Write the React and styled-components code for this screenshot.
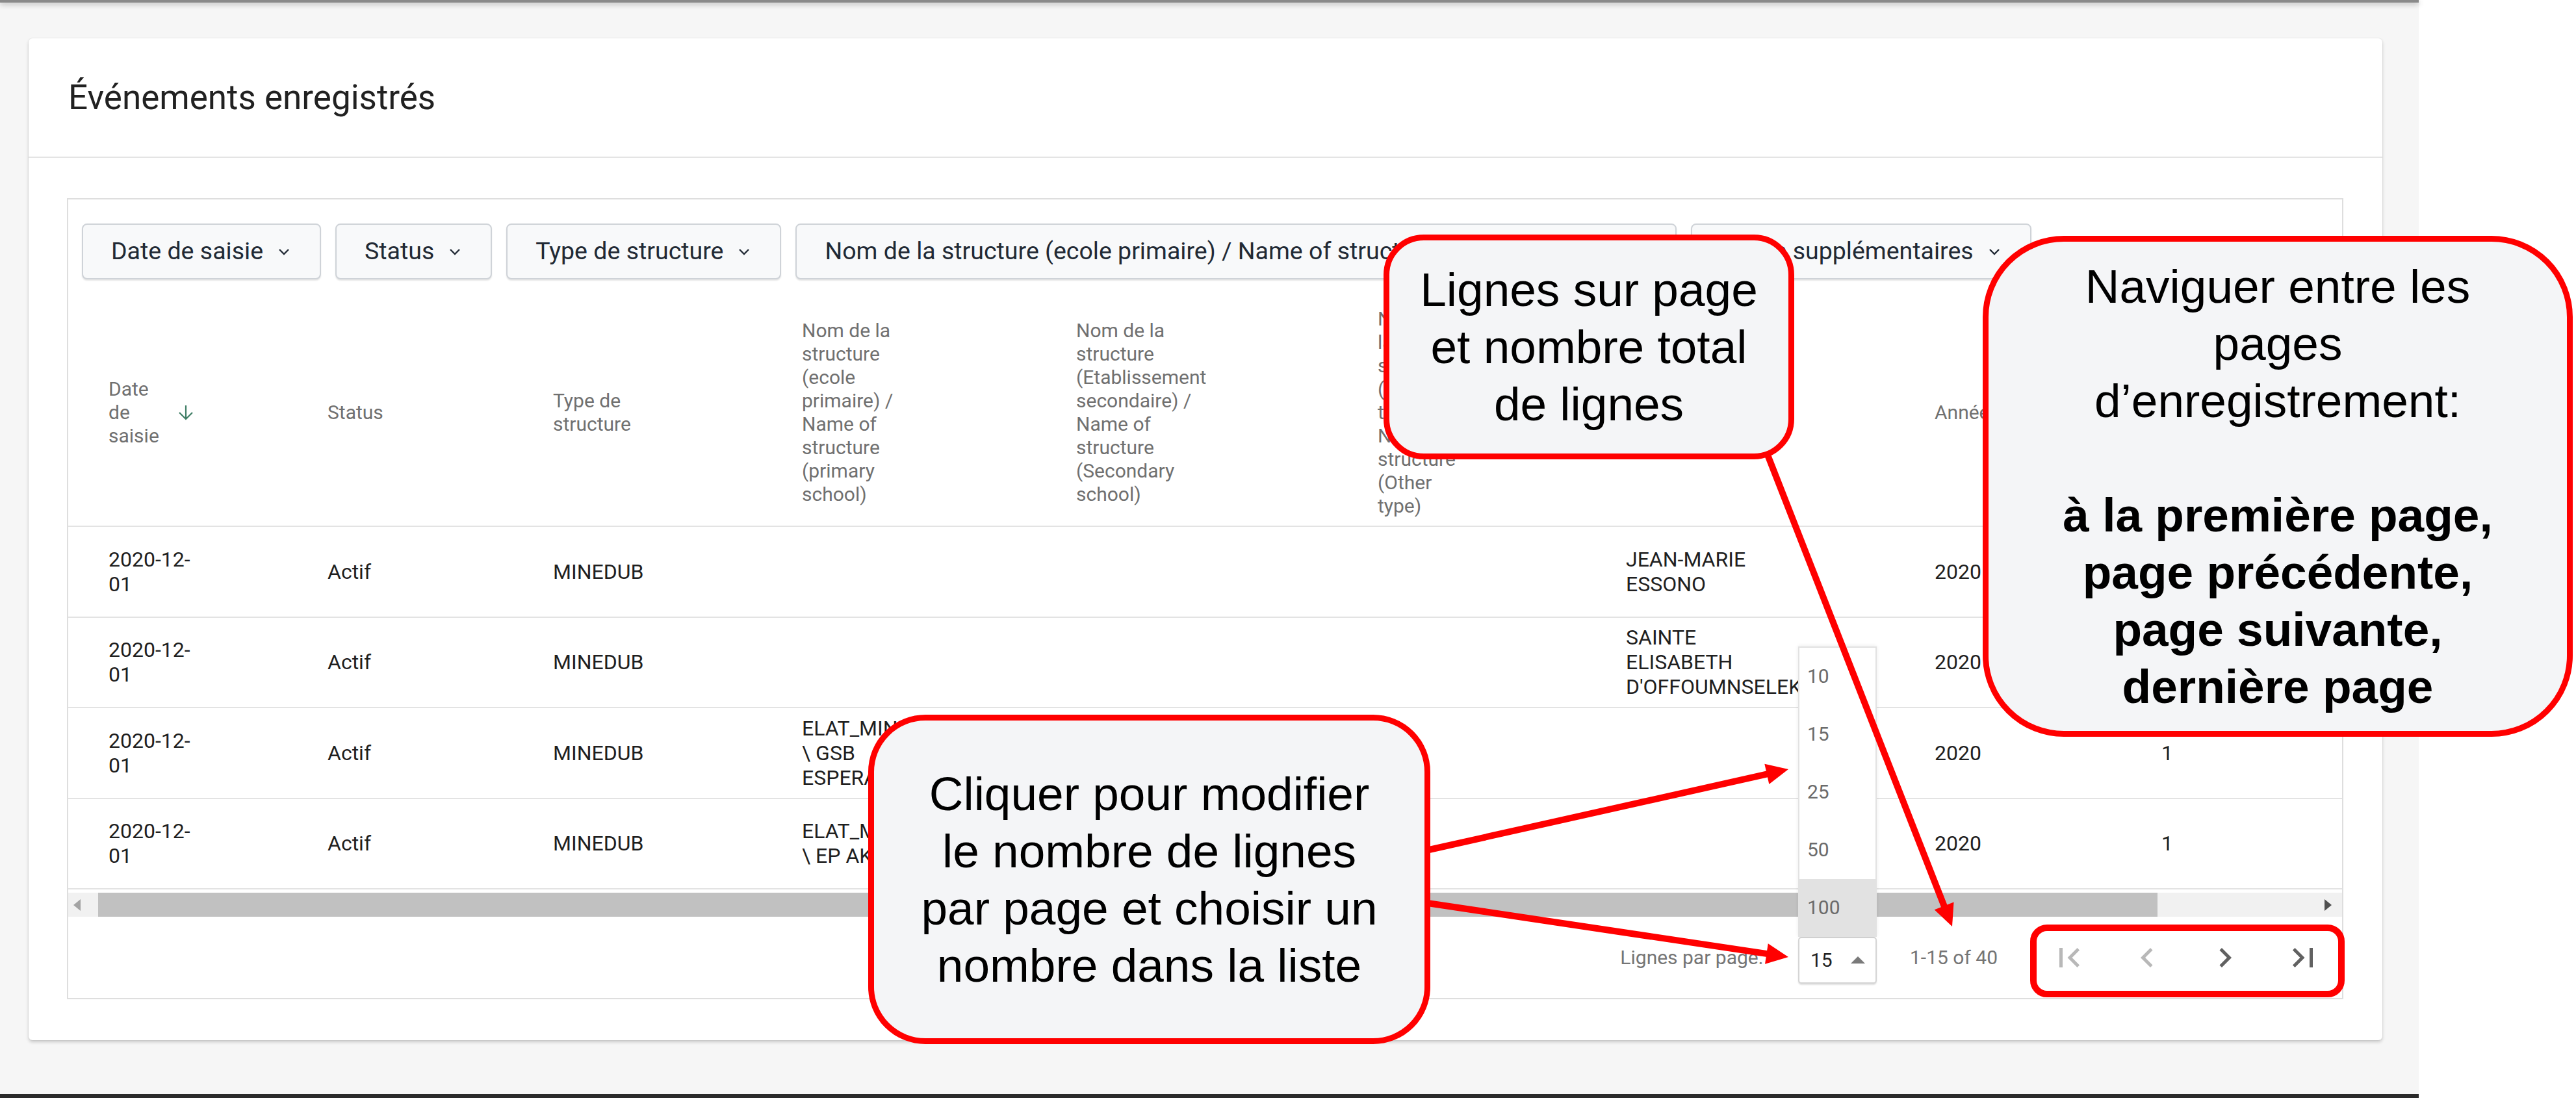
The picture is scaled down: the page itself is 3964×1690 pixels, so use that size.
import React from 'react';
import styled, { createGlobalStyle } from 'styled-components';

const GlobalStyle = createGlobalStyle`
  html, body { margin: 0; padding: 0; background: #ffffff; }
  body { font-family: Roboto, "Liberation Sans", Arial, sans-serif; }
  * { box-sizing: border-box; }
`;

const Screen = styled.div`
  position: relative;
  width: 3964px;
  height: 1690px;
  overflow: hidden;
  display: flex;
  background: #ffffff;
`;

const Viewport = styled.div`
  width: 3722px;
  height: 1690px;
  background: #f6f6f6;
  display: flex;
  flex-direction: column;
  flex: none;
`;

const TopShade = styled.div`
  height: 4px;
  flex: none;
  background: #8a8a8a;
  box-shadow: 0 2px 8px rgba(0, 0, 0, 0.35);
`;

const Content = styled.main`
  flex: 1;
  padding: 55px 56px 0 44px;
`;

const BottomBar = styled.div`
  height: 6px;
  flex: none;
  background: #2b2b2b;
`;

const Card = styled.section`
  background: #ffffff;
  border-radius: 6px;
  box-shadow: 0 3px 5px rgba(0, 0, 0, 0.18), 0 0 2px rgba(0, 0, 0, 0.12);
`;

const CardHeader = styled.header`
  height: 184px;
  display: flex;
  align-items: center;
  padding-left: 61px;
  border-bottom: 2px solid #e4e4e4;
`;

const Title = styled.h2`
  margin: 0;
  font: 400 53px/1 Roboto, "Liberation Sans", sans-serif;
  color: #212121;
`;

const CardBody = styled.div`
  padding: 62px 60px 63px 59px;
`;

const Panel = styled.div`
  border: 2px solid #dedede;
`;

const FilterBar = styled.div`
  display: flex;
  gap: 22px;
  padding: 37px 20px 0 21px;
  margin-bottom: 31px;
`;

const FilterButton = styled.button`
  height: 86px;
  padding: 0 46px 0 43px;
  display: inline-flex;
  align-items: center;
  gap: 23px;
  font: 400 37.5px/1 Roboto, "Liberation Sans", sans-serif;
  color: #212934;
  background: #f8f9fa;
  border: 2px solid #cfd3d8;
  border-radius: 8px;
  box-shadow: 0 2px 2px rgba(0, 0, 0, 0.1);
  white-space: nowrap;
  flex: none;
`;

const TableViewport = styled.div`
  overflow: hidden;
`;

const GridRow = styled.div`
  display: grid;
  grid-template-columns: ${(p) => p.$cols};
  height: ${(p) => p.$h}px;
  border-bottom: 2px solid #e3e3e3;
  width: max-content;
`;

const HeadCell = styled.div`
  min-width: 0;
  display: flex;
  align-items: center;
  padding: 0 20px 0 ${(p) => (p.$first ? 62 : 0)}px;
  font: 400 30px/36px Roboto, "Liberation Sans", sans-serif;
  color: #707070;
`;

const HeadLabel = styled.span`
  display: block;
  max-width: ${(p) => p.$max}px;
  flex: ${(p) => (p.$fixed ? `0 0 ${p.$max}px` : '0 1 auto')};
`;

const SortIcon = styled.svg`
  flex: none;
  margin-left: 14px;
`;

const Cell = styled.div`
  min-width: 0;
  display: flex;
  align-items: center;
  padding: 0 20px 0 ${(p) => (p.$first ? 62 : 0)}px;
  font: 400 32px/38px Roboto, "Liberation Sans", sans-serif;
  color: #1f1f1f;
`;

const CellText = styled.span`
  display: block;
  max-width: ${(p) => p.$max}px;
  white-space: normal;
`;

const ScrollBar = styled.div`
  margin-top: 5px;
  height: 37px;
  display: flex;
  align-items: stretch;
  background: #f1f1f1;
`;

const ScrollArrow = styled.div`
  width: ${(p) => p.$w}px;
  flex: none;
  display: flex;
  align-items: center;
  justify-content: ${(p) => (p.$left ? 'flex-start' : 'center')};
  padding-left: ${(p) => (p.$left ? 8 : 0)}px;
  &::after {
    content: '';
    width: 0;
    height: 0;
    border-top: 9px solid transparent;
    border-bottom: 9px solid transparent;
    ${(p) =>
      p.$left
        ? 'border-right: 11px solid #a3a3a3;'
        : 'border-left: 11px solid #505050;'}
  }
`;

const ScrollThumb = styled.div`
  width: ${(p) => p.$w}px;
  flex: none;
  background: #c1c1c1;
`;

const ScrollRest = styled.div`
  flex: 1;
`;

const Footer = styled.div`
  height: 125px;
  display: flex;
  align-items: center;
  justify-content: flex-end;
  font: 400 30px/1 Roboto, "Liberation Sans", sans-serif;
  color: #757575;
`;

const FooterLabel = styled.span`
  margin-right: 54px;
  white-space: nowrap;
`;

const SelectWrap = styled.div`
  position: relative;
  margin-right: 51px;
  margin-top: 8px;
`;

const SelectBox = styled.div`
  width: 121px;
  height: 72px;
  display: flex;
  align-items: center;
  padding-left: 17px;
  border: 2px solid #d5d5d5;
  border-radius: 5px;
  background: #ffffff;
  box-shadow: 0 2px 2px rgba(0, 0, 0, 0.12);
  color: #212121;
  &::after {
    content: '';
    margin-left: auto;
    margin-right: 16px;
    width: 0;
    height: 0;
    border-left: 11px solid transparent;
    border-right: 11px solid transparent;
    border-bottom: 11px solid #7a7a7a;
  }
`;

const Menu = styled.ul`
  position: absolute;
  left: 0;
  bottom: 100%;
  width: 121px;
  margin: 0;
  padding: 0;
  list-style: none;
  background: #ffffff;
  border: 2px solid #e2e2e2;
  border-bottom: none;
  box-shadow: 0 -1px 6px rgba(0, 0, 0, 0.08);
  z-index: 2;
`;

const MenuItem = styled.li`
  height: 89px;
  display: flex;
  align-items: center;
  padding-left: 12px;
  color: #6b6b6b;
  background: ${(p) => (p.$active ? '#e2e2e2' : 'transparent')};
`;

const RangeText = styled.span`
  margin-right: 50px;
  white-space: nowrap;
`;

const PageButtons = styled.div`
  display: flex;
`;

const PageButton = styled.button`
  width: 120px;
  height: 100px;
  padding: 0;
  border: none;
  background: transparent;
  display: flex;
  align-items: center;
  justify-content: center;
  color: ${(p) => (p.$disabled ? '#b8b8b8' : '#616161')};
`;

const Callout = styled.div`
  position: absolute;
  left: ${(p) => p.$x}px;
  top: ${(p) => p.$y}px;
  width: ${(p) => p.$w}px;
  height: ${(p) => p.$h}px;
  border: 9px solid #ff0000;
  border-radius: ${(p) => p.$r}px;
  background: #f4f5f7;
  display: flex;
  align-items: center;
  justify-content: center;
  text-align: center;
  font: 400 73px/88px "Liberation Sans", Arial, sans-serif;
  color: #000000;
  z-index: 5;
`;

const CalloutText = styled.p`
  margin: 0;
`;

const Strong = styled.b`
  font-weight: 700;
`;

const Frame = styled.div`
  position: absolute;
  left: 3124px;
  top: 1423px;
  width: 484px;
  height: 112px;
  border: 10px solid #ff0000;
  border-radius: 26px;
  z-index: 5;
`;

const ArrowLayer = styled.svg`
  position: absolute;
  left: 0;
  top: 0;
  width: 3964px;
  height: 1690px;
  pointer-events: none;
  z-index: 4;
`;

const Chevron = () => (
  <svg width="18" height="11" viewBox="0 0 18 11" aria-hidden="true">
    <polyline points="2,2 9,9 16,2" fill="none" stroke="#212934" strokeWidth="2.4" />
  </svg>
);

const ArrowDown = () => (
  <SortIcon width="26" height="24" viewBox="0 0 26 24" aria-hidden="true">
    <line x1="13" y1="1" x2="13" y2="22" stroke="#3e7d64" strokeWidth="2.2" />
    <polyline points="3,12 13,22 23,12" fill="none" stroke="#3e7d64" strokeWidth="2.2" />
  </SortIcon>
);

const icons = {
  first: 'M18.41 16.59L13.82 12l4.59-4.59L17 6l-6 6 6 6zM6 6h2v12H6z',
  prev: 'M15.41 7.41L14 6l-6 6 6 6 1.41-1.41L10.83 12z',
  next: 'M10 6L8.59 7.41 13.17 12l-4.58 4.59L10 18l6-6z',
  last: 'M5.59 7.41L10.18 12l-4.59 4.59L7 18l6-6-6-6zM16 6h2v12h-2z',
};

const PageIcon = ({ d }) => (
  <svg width="60" height="60" viewBox="0 0 24 24" aria-hidden="true">
    <path d={d} fill="currentColor" />
  </svg>
);

function Arrow({ from, to, width = 10, head = 34, spread = 32 }) {
  const dx = to[0] - from[0];
  const dy = to[1] - from[1];
  const len = Math.hypot(dx, dy);
  const ux = dx / len;
  const uy = dy / len;
  const bx = to[0] - ux * head;
  const by = to[1] - uy * head;
  const nx = (-uy * spread) / 2;
  const ny = (ux * spread) / 2;
  return (
    <g>
      <line
        x1={from[0]}
        y1={from[1]}
        x2={bx + ux * 3}
        y2={by + uy * 3}
        stroke="#ff0000"
        strokeWidth={width}
      />
      <polygon
        points={`${to[0]},${to[1]} ${bx + nx},${by + ny} ${bx - nx},${by - ny}`}
        fill="#ff0000"
      />
    </g>
  );
}

const columns = [
  { key: 'date', label: 'Date de saisie', width: 399, sort: true, labelMax: 92 },
  { key: 'status', label: 'Status', width: 347 },
  { key: 'type', label: 'Type de structure', width: 383 },
  {
    key: 'primary',
    label: 'Nom de la structure (ecole primaire) / Name of structure (primary school)',
    width: 422,
  },
  {
    key: 'secondary',
    label: 'Nom de la structure (Etablissement secondaire) / Name of structure (Secondary school)',
    width: 464,
  },
  {
    key: 'other',
    label: 'Nom de la structure (Autre type) / Name of structure (Other type)',
    width: 382,
    labelMax: 125,
  },
  { key: 'name', label: "Nom de l'établissement", width: 475 },
  { key: 'year', label: 'Année', width: 349 },
  { key: 'count', label: 'Nombre', width: 360 },
  { key: 'region', label: 'Région', width: 184 },
];

const gridCols = columns.map((c) => `${c.width}px`).join(' ');

const rows = [
  { date: '2020-12-01', status: 'Actif', type: 'MINEDUB', name: 'JEAN-MARIE ESSONO', year: '2020', count: '1' },
  {
    date: '2020-12-01',
    status: 'Actif',
    type: 'MINEDUB',
    name: "SAINTE ELISABETH D'OFFOUMNSELEK",
    year: '2020',
    count: '1',
  },
  {
    date: '2020-12-01',
    status: 'Actif',
    type: 'MINEDUB',
    primary: 'ELAT_MINEDUB \\ GSB ESPERANCE',
    year: '2020',
    count: '1',
  },
  {
    date: '2020-12-01',
    status: 'Actif',
    type: 'MINEDUB',
    primary: 'ELAT_MINEDUB \\ EP AKOM',
    year: '2020',
    count: '1',
  },
];

const filters = [
  'Date de saisie',
  'Status',
  'Type de structure',
  'Nom de la structure (ecole primaire) / Name of structure (primary school)',
  'Filtres supplémentaires',
];

const renderValue = (key, value) => {
  if (!value) return null;
  if (key === 'date') {
    return (
      <>
        {value.slice(0, 8)}
        <wbr />
        {value.slice(8)}
      </>
    );
  }
  return value;
};

export default function App() {
  return (
    <>
      <GlobalStyle />
      <Screen>
        <Viewport>
          <TopShade />
          <Content>
            <Card>
              <CardHeader>
                <Title>Événements enregistrés</Title>
              </CardHeader>
              <CardBody>
                <Panel>
                  <FilterBar>
                    {filters.map((f) => (
                      <FilterButton key={f}>
                        {f}
                        <Chevron />
                      </FilterButton>
                    ))}
                  </FilterBar>
                  <TableViewport>
                    <GridRow $cols={gridCols} $h={350} role="row">
                      {columns.map((c, i) => (
                        <HeadCell key={c.key} $first={i === 0} role="columnheader">
                          <HeadLabel $max={c.labelMax || 200} $fixed={c.sort}>
                            {c.label}
                          </HeadLabel>
                          {c.sort && <ArrowDown />}
                        </HeadCell>
                      ))}
                    </GridRow>
                    {rows.map((r, ri) => (
                      <GridRow key={ri} $cols={gridCols} $h={139.5} role="row">
                        {columns.map((c, i) => (
                          <Cell key={c.key} $first={i === 0} role="cell">
                            <CellText $max={i === 0 ? 145 : 200}>{renderValue(c.key, r[c.key])}</CellText>
                          </Cell>
                        ))}
                      </GridRow>
                    ))}
                  </TableViewport>
                  <ScrollBar>
                    <ScrollArrow $left $w={46} />
                    <ScrollThumb $w={3169} />
                    <ScrollRest />
                    <ScrollArrow $w={44} />
                  </ScrollBar>
                  <Footer>
                    <FooterLabel>Lignes par page:</FooterLabel>
                    <SelectWrap>
                      <Menu>
                        {[10, 15, 25, 50, 100].map((n) => (
                          <MenuItem key={n} $active={n === 100}>
                            {n}
                          </MenuItem>
                        ))}
                      </Menu>
                      <SelectBox>15</SelectBox>
                    </SelectWrap>
                    <RangeText>1-15 of 40</RangeText>
                    <PageButtons>
                      <PageButton $disabled aria-label="Première page">
                        <PageIcon d={icons.first} />
                      </PageButton>
                      <PageButton $disabled aria-label="Page précédente">
                        <PageIcon d={icons.prev} />
                      </PageButton>
                      <PageButton aria-label="Page suivante">
                        <PageIcon d={icons.next} />
                      </PageButton>
                      <PageButton aria-label="Dernière page">
                        <PageIcon d={icons.last} />
                      </PageButton>
                    </PageButtons>
                  </Footer>
                </Panel>
              </CardBody>
            </Card>
          </Content>
          <BottomBar />
        </Viewport>

        <ArrowLayer viewBox="0 0 3964 1690">
          <Arrow from={[2718, 695]} to={[3004, 1426]} />
          <Arrow from={[2190, 1310]} to={[2752, 1184]} />
          <Arrow from={[2190, 1389]} to={[2752, 1473]} />
        </ArrowLayer>

        <Callout $x={2129} $y={361} $w={632} $h={346} $r={62}>
          <CalloutText>
            Lignes sur page
            <br />
            et nombre total
            <br />
            de lignes
          </CalloutText>
        </Callout>

        <Callout $x={3051} $y={363} $w={908} $h={771} $r={125}>
          <CalloutText>
            Naviguer entre les
            <br />
            pages
            <br />
            d’enregistrement:
            <br />
            <br />
            <Strong>
              à la première page,
              <br />
              page précédente,
              <br />
              page suivante,
              <br />
              dernière page
            </Strong>
          </CalloutText>
        </Callout>

        <Callout $x={1336} $y={1100} $w={865} $h={507} $r={88}>
          <CalloutText>
            Cliquer pour modifier
            <br />
            le nombre de lignes
            <br />
            par page et choisir un
            <br />
            nombre dans la liste
          </CalloutText>
        </Callout>

        <Frame />
      </Screen>
    </>
  );
}
